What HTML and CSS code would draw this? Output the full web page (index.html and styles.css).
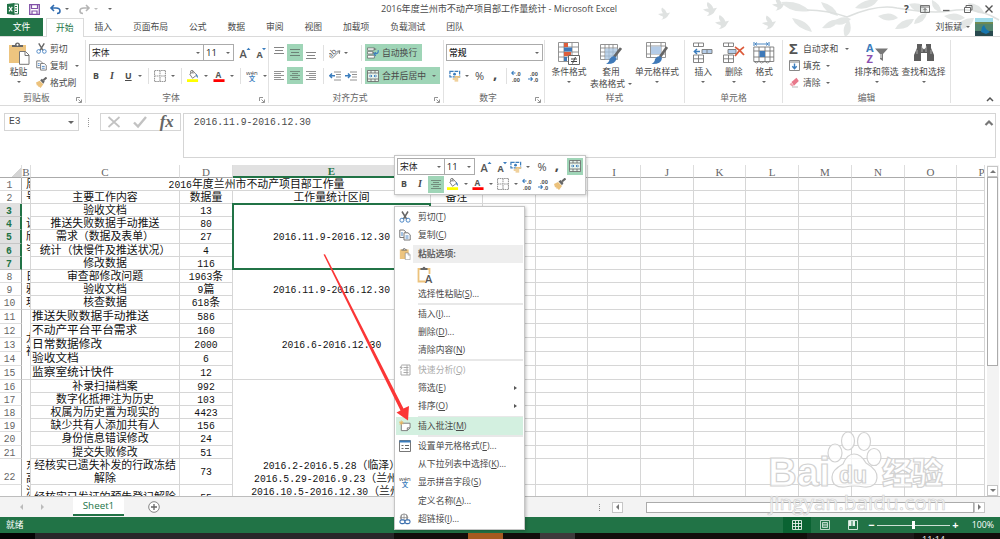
FILE: index.html
```html
<!DOCTYPE html>
<html lang="zh-CN">
<head>
    <meta charset="UTF-8">
    <title>2016年度兰州市不动产项目部工作量统计 - Microsoft Excel</title>
    <link rel="stylesheet" href="styles.css">
</head>
<body>
<svg class="defs">
    <symbol id="i-cut" viewBox="0 0 12 12"><path d="M3 0.5L7.6 8M9 0.5L4.4 8" stroke="#666" stroke-width="1.5" fill="none"/><circle cx="2.9" cy="9.2" r="2" fill="none" stroke="#4a86c5"/><circle cx="9.1" cy="9.2" r="2" fill="none" stroke="#4a86c5"/></symbol>
    <symbol id="i-copy" viewBox="0 0 12 12"><path d="M.8 1h4l2 2v5.500H.8z" fill="#fff" stroke="#777"/><path d="M5 3.800h4l2.200 2v5.200H5z" fill="#fff" stroke="#777"/><path d="M2 4h2M2 6h2M6.500 7h3M6.500 9h3" stroke="#4a86c5"/></symbol>
    <symbol id="i-brush" viewBox="0 0 12 12"><path d="M0 6l4-2 4 4-3 4-1.500-1.500-1 .2-.3-1.500-1.200 0z" fill="#ecc27c"/><path d="M4.500 3.500l2-1.500 3 3-1.500 2.300z" fill="#666"/><path d="M8 3.500L11.500.5" stroke="#666" stroke-width="2.200"/></symbol>
    <symbol id="i-paste" viewBox="0 0 22 23"><path d="M1 3h17v18H1z" fill="#edc47f"/><path d="M4 5V3h3q0-2.500 2.500-2.500T12 3h3v2z" fill="#666"/><circle cx="9.500" cy="2.800" r="1" fill="#fff"/><path d="M11.500 9.500h6l3.500 3.500v9.300h-9.500z" fill="#fff" stroke="#777"/><path d="M17 9.500v4h4" fill="none" stroke="#777"/></symbol>
    <symbol id="i-border" viewBox="0 0 11 11"><path d="M.5.5h10v10H.5zM5.500.5v10M.5 5.500h10" fill="none" stroke="#999" stroke-dasharray="1.500 .5"/></symbol>
    <symbol id="i-fill" viewBox="0 0 13 13"><path d="M3 4.500l4-3 3.500 4-4.500 3.500z" fill="#fff" stroke="#777"/><path d="M4 3.500V1q1.500-1.500 2.500 0v3" fill="none" stroke="#777"/><path d="M10 4q2.500 2 1.500 5Q9 7 10 4z" fill="#3b7dbd"/><path d="M0 10h12v3H0z" fill="#ff0"/></symbol>
    <symbol id="i-color" viewBox="0 0 12 13"><text x="2.200" y="9" class="svg-a">A</text><path d="M0 10h12v3H0z" fill="#f00"/></symbol>
    <symbol id="i-up" viewBox="0 0 11 12"><text x="0" y="11" class="svg-a big">A</text><path d="M7 3l2-2.200L11 3z" fill="#3b7dbd"/></symbol>
    <symbol id="i-down" viewBox="0 0 11 12"><text x="1" y="11" class="svg-a">A</text><path d="M6.500 1l2 2.200 2-2.200z" fill="#3b7dbd"/></symbol>
    <symbol id="i-wen" viewBox="0 0 13 13"><text x="0" y="5" class="svg-w">wén</text><text x="3" y="12" class="svg-z">文</text></symbol>
    <symbol id="i-top" viewBox="0 0 12 17"><path d="M1 3.500h10M2 6.500h8M1 9.500h10" stroke="#777" stroke-width=".9"/></symbol>
    <symbol id="i-mid" viewBox="0 0 12 17"><path d="M1 5.500h10M2 8.500h8M1 11.500h10" stroke="#67786e" stroke-width=".9"/></symbol>
    <symbol id="i-bot" viewBox="0 0 12 17"><path d="M1 8.500h10M2 11.500h8M1 14.500h10" stroke="#777" stroke-width=".9"/></symbol>
    <symbol id="i-left" viewBox="0 0 12 17"><path d="M1 4.500h10M1 6.500h7M1 8.500h10M1 10.500h7M1 12.500h10" stroke="#777" stroke-width=".8"/></symbol>
    <symbol id="i-center" viewBox="0 0 12 17"><path d="M1 4.500h10M3 6.500h6M1 8.500h10M3 10.500h6M1 12.500h10" stroke="#67786e" stroke-width=".8"/></symbol>
    <symbol id="i-right" viewBox="0 0 12 17"><path d="M1 4.500h10M4 6.500h7M1 8.500h10M4 10.500h7M1 12.500h10" stroke="#777" stroke-width=".8"/></symbol>
    <symbol id="i-orient" viewBox="0 0 12 12"><text x="-1.500" y="8" transform="rotate(-42 4 6)" class="svg-o">ab</text><path d="M3 11.500L10.500 4M7.500 4.500l3.300-.8-.5 3.300" fill="none" stroke="#777" stroke-width=".9"/></symbol>
    <symbol id="i-outdent" viewBox="0 0 12 9"><path d="M5 .5h7M7 3h5M7 5.500h5M5 8.500h7" stroke="#777" stroke-width=".8"/><path d="M6 4.300H1M3 2L.8 4.300 3 6.500" fill="none" stroke="#3b7dbd" stroke-width="1.400"/></symbol>
    <symbol id="i-indent" viewBox="0 0 12 9"><path d="M5 .5h7M7 3h5M7 5.500h5M5 8.500h7" stroke="#777" stroke-width=".8"/><path d="M0 4.300h5M3 2l2.200 2.300L3 6.500" fill="none" stroke="#3b7dbd" stroke-width="1.400"/></symbol>
    <symbol id="i-wrap" viewBox="0 0 13 12"><path d="M.5.5h7.500v2.500H.5zM.5 4.500h6v2.500h-6zM.5 8.500h7.500v3H.5z" fill="#fff" stroke="#666" stroke-width=".8"/><path d="M7 1.800h3M6 5.800h2" stroke="#666"/><path d="M12 3q1 4-4 4M9.500 5L7.500 7l2 2" fill="none" stroke="#3b7dbd" stroke-width="1.200"/></symbol>
    <symbol id="i-merge" viewBox="0 0 12 12"><path d="M.5.500h11v11H.5zM.5 3h11M.5 9h11M4 .5V3M8 .5V3M4 9v2.500M8 9v2.500" fill="#e7f3ec" stroke="#666" stroke-width=".8"/><path d="M2 6h3M10 6H7M3.800 4.800L5 6 3.800 7.200M8.200 4.800L7 6l1.200 1.200" fill="none" stroke="#3b7dbd" stroke-width=".9"/></symbol>
    <symbol id="i-money" viewBox="0 0 13 12"><path d="M1 1h10.500v6H1z" fill="#fff" stroke="#3b7dbd" stroke-width="1.300" stroke-dasharray="4 1"/><circle cx="6" cy="4" r="1.500" fill="#3b7dbd"/><path d="M6 6h6v2H6zM4 8.500h6v1.500H4zM6 10.500h4V12H6z" fill="#ecc27c"/></symbol>
    <symbol id="i-dec1" viewBox="0 0 12 12"><text x="5" y="5.500" class="svg-d">.0</text><text x="1" y="11.500" class="svg-d">.00</text><path d="M4.500 3H1M2.500 1.200L.8 3l1.700 1.800" fill="none" stroke="#3b7dbd" stroke-width="1.100"/></symbol>
    <symbol id="i-dec2" viewBox="0 0 12 12"><text x="2" y="5.500" class="svg-d">.00</text><text x="5.500" y="11.500" class="svg-d">.0</text><path d="M0 9h4M2.700 7.200L4.400 9l-1.700 1.800" fill="none" stroke="#3b7dbd" stroke-width="1.100"/></symbol>
    <symbol id="i-cond" viewBox="0 0 22 23"><path d="M.5.5h20v19H.5zM.5 5h20M.5 10h20M.5 15h20M6 .5v19M14 .5v19" fill="#fff" stroke="#888" stroke-width=".9"/><path d="M6 1h4v4H6zM6 10h7v4H6z" fill="#dd5e3c"/><path d="M6 5.500h8v4H6zM6 15h3v4H6z" fill="#3f79b8"/><path d="M10.500 13.500h11v9h-11z" fill="#fff" stroke="#666"/><path d="M13 17h6M13 19.500h6M17.500 15l-3 6.500" stroke="#444"/></symbol>
    <symbol id="i-table" viewBox="0 0 22 23"><path d="M.5 2.500h17v15H.5zM.5 6h17M.5 10h17M.5 14h17M5 2.500v15M9 2.500v15M13 2.500v15" fill="#fff" stroke="#888" stroke-width=".9"/><path d="M5 6.500h12.500v11H5z" fill="#a7c4e2" opacity=".75"/><path d="M21 6l-7 9" stroke="#666" stroke-width="2.700"/><path d="M14.500 14l2 2.500q-1 6-10.500 5.500 3.500-2 3.500-5 2-3 5-3z" fill="#3f79b8"/></symbol>
    <symbol id="i-style" viewBox="0 0 22 23"><path d="M.5.5h19v15H.5zM.5 4h19M.5 12h19M4.500.5v15M15 .5v15" fill="#fff" stroke="#888" stroke-width=".9"/><path d="M5 4.500h10V12H5z" fill="#b4cce8"/><path d="M21 5l-7 10" stroke="#666" stroke-width="2.700"/><path d="M14 14l2 2.500q-1 6-10.500 5.500 3.500-2 3.500-5 2-3 5-3z" fill="#3f79b8"/></symbol>
    <symbol id="i-insert" viewBox="0 0 22 23"><path d="M1.500 1h10v3.500h-10zM6.500 1v3.500M1.500 13h10v7.500h-10zM6.500 13v7.500M1.500 16.800h10" fill="#fff" stroke="#777" stroke-width=".9"/><path d="M10 7.500h10v4H10zM15 7.500v4" fill="#b4cce8" stroke="#777" stroke-width=".9"/><path d="M8 9.500H2.500M5 7L2.300 9.500 5 12" fill="none" stroke="#3b7dbd" stroke-width="1.400"/></symbol>
    <symbol id="i-delete" viewBox="0 0 22 23"><path d="M.5 1h10v3.500H.5zM5.500 1v3.500M.5 13h10v7.500H.5zM5.500 13v7.500M.5 16.800h10" fill="#fff" stroke="#777" stroke-width=".9"/><path d="M5 7.500h8v4H5z" fill="#b4cce8" stroke="#777" stroke-width=".9"/><path d="M12 5q5 3 9 8M21 5q-5 3-9 9" fill="none" stroke="#dc5b3b" stroke-width="1.700"/></symbol>
    <symbol id="i-format" viewBox="0 0 22 23"><path d="M1 0v4M16 0v4" stroke="#3b7dbd"/><path d="M2 2h13M4 .5L2 2l2 1.500M13 .5L15 2l-2 1.500" fill="none" stroke="#3b7dbd" stroke-width=".9"/><path d="M.8 5h20v14.500H.8zM.8 9h20M.8 15h20M6 5v14.500M12 5v14.500M17 5v14.500" fill="#fff" stroke="#777" stroke-width=".9"/><path d="M6.500 9H12v6H6.500z" fill="#3f79b8"/><path d="M1 19.500q2 3 5 0 2 3 6 0 2 3 5 0" fill="none" stroke="#777" stroke-width=".8"/></symbol>
    <symbol id="i-sort" viewBox="0 0 22 23"><text x="0" y="10" class="svg-s">A</text><text x=".5" y="20.500" class="svg-s z">Z</text><path d="M9 6.500h13L17 12v7l-3-2v-5z" fill="#777"/><path d="M15 12v4" stroke="#fff"/></symbol>
    <symbol id="i-find" viewBox="0 0 22 23"><path d="M4 2h5v3.500l2 2 2-2V2h5v4l3 7v6h-7v-8h-6v8H1v-6l3-7z" fill="#5d5d5d"/><path d="M4 8v4M18 8v4M9 4v6M13 4v6" stroke="#ddd" stroke-width=".6"/></symbol>
    <symbol id="i-down-box" viewBox="0 0 11 11"><path d="M.5.500h10v10H.5z" fill="#fff" stroke="#888"/><path d="M.5 2h10" stroke="#888"/><path d="M5.500 3.500v5M3.300 6.200l2.200 2.500 2.200-2.500" fill="none" stroke="#3b7dbd" stroke-width="1.400"/></symbol>
    <symbol id="i-erase" viewBox="0 0 11 11"><path d="M2.500 5L7.500.8 9.800 4 5 8.800z" fill="#e8788b"/><path d="M2.200 5.400l2.500 3.300-1.500.8L.6 7.500z" fill="#f0a3ae"/><path d="M3 10h6" stroke="#999" stroke-width=".7"/></symbol>
    <symbol id="i-analyse" viewBox="0 0 12 12"><path d="M3 1h8v10H2V7M4.500 3.500h5M4.500 6h5M4.500 8.500h5M8 1v10" fill="none" stroke="#aaa"/><path d="M3 0L.5 4H2L.8 7 4 3.200H2.600z" fill="#aaa"/></symbol>
    <symbol id="i-note" viewBox="0 0 13 12"><path d="M2.500 3h9.500v5l-3 3H2.500z" fill="#fff" stroke="#777"/><path d="M12 8H9v3" fill="none" stroke="#777"/><path d="M2.500 0v5M0 2.500h5M.8.8l3.400 3.400M4.200.8L.8 4.200" stroke="#eab65f" stroke-width=".9"/></symbol>
    <symbol id="i-cells" viewBox="0 0 12 12"><path d="M.5.5h11v11H.5z" fill="#fff" stroke="#777"/><path d="M.5 1.500h11" stroke="#3b7dbd" stroke-width="2"/><path d="M2.500 5.500h2M6 5.500h4M2.500 8.500h2M6 8.500h4" stroke="#666"/></symbol>
    <symbol id="i-link" viewBox="0 0 13 12"><circle cx="5.500" cy="4.500" r="4" fill="none" stroke="#777" stroke-width=".8"/><path d="M1.500 4.500h8M5.500.5v7M3 1.500q-1 3 0 5M8 1.500q1 3 0 5" stroke="#777" fill="none" stroke-width=".7"/><rect x="1" y="7" width="5.500" height="4" rx="2" fill="#fff" stroke="#3b6fae" stroke-width="1.200"/><rect x="6.500" y="7" width="5.500" height="4" rx="2" fill="#fff" stroke="#3b6fae" stroke-width="1.200"/></symbol>
    <symbol id="i-launch" viewBox="0 0 6 6"><path d="M.5 4V.5H4M2.500 2.500l2.500 2.500M5.500 2.500v3h-3" fill="none" stroke="#777" stroke-width=".8"/></symbol>
    <symbol id="bird" viewBox="0 0 16 16"><path d="M0 8q4-1 6-1-3-4-1-7 5 3 6 7l4-1-2 3q-2 5-9 6 3-2 2-4-3-1-6-3z" fill="#dfe2e1"/></symbol>
</svg>

<div class="window">
    <header class="titlebar">
        <svg class="deco" viewBox="0 0 350 37">
            <use href="#bird" x="8" y="7" width="13" height="14"/>
            <use href="#bird" x="53" y="1" width="15" height="17"/>
            <use href="#bird" x="65" y="14" width="15" height="17"/>
            <use href="#bird" x="112" y="15" width="15" height="16"/>
            <use href="#bird" x="122" y="-3" width="14" height="15"/>
            <g fill="#e3e6e5">
                <path d="M131 2q18-2 29 9-20 3-29-9zM142 18q16 2 20 14-16-4-20-14zM171 2q14 3 17 14-13-2-17-14zM181 23q11-9 20-4-8 9-20 4zM172 28q8-10 16-8-3 10-16 8zM199 20q5 12-4 17-4-10 4-17zM205 8q9-10 23-8-7 11-23 8zM228 16q13-6 20 2-11 6-20-2zM245 29q6-11 19-10-4 11-19 10zM259 4q14-3 20 8-15 2-20-8zM277 13q-2 10-13 11 2-10 13-11zM294 16q12-6 21 2-10 6-21-2zM306 29q5-12 18-11-3 12-18 11zM318 3q12 0 17 11-15-1-17-11zM325 20q12-1 14 10-12 0-14-10zM282 0q9 4 9 12-10-2-9-12z"/>
                <path d="M157 10q20 0 40 7 30-13 50-9 35 6 52 3 28-5 50 9" fill="none" stroke="#dde0df" stroke-width="1.600"/>
            </g>
        </svg>
        <div class="quick">
            <svg class="xl" viewBox="0 0 12 12"><path d="M6 1h5.500v10H6z" fill="#fff" stroke="#217346"/><path d="M8 3.500h2M8 6h2M8 8.500h2" stroke="#217346"/><path d="M0 1l7.500-1v12L0 11z" fill="#217346"/><path d="M2 3.800l3.300 4.500M5.300 3.800L2 8.300" stroke="#fff" stroke-width="1.100"/></svg>
            <svg class="save" viewBox="0 0 11 11"><path d="M.7.700h9.600v9.600H.7z" fill="#fff" stroke="#8252a8" stroke-width="1.300"/><path d="M2.500 1v3.500h6V1M3 10V7h5v3" fill="none" stroke="#8252a8" stroke-width="1.200"/></svg>
            <svg class="undo" viewBox="0 0 11 9"><path d="M4 0L1 3l3 3M1 3h5q4 0 4 3 0 2.500-3 2.500" fill="none" stroke="#2f6bb0" stroke-width="1.600"/></svg>
            <i class="caret"></i>
            <svg class="undo redo" viewBox="0 0 11 9"><path d="M7 0l3 3-3 3M10 3H5Q1 3 1 6q0 2.500 3 2.500" fill="none" stroke="#b5b5b5" stroke-width="1.600"/></svg>
            <i class="caret pale"></i>
            <i class="caret last"></i>
        </div>
        <h1>2016年度兰州市不动产项目部工作量统计 - Microsoft Excel</h1>
        <div class="winbtns">
            <b>?</b>
            <svg viewBox="0 0 10 8"><path d="M.5.5h9v7h-9zM.5 2h9M5 7V3.500M3.500 5L5 3.500 6.500 5" fill="none" stroke="#666" stroke-width=".9"/></svg>
            <svg viewBox="0 0 10 8"><path d="M2 5.500h6.500" stroke="#666" stroke-width="1.300"/></svg>
            <svg viewBox="0 0 10 8"><path d="M1.500 2.500h6v5h-6zM3 2.500V.5h6v4.500H7.500" fill="none" stroke="#666"/></svg>
            <svg viewBox="0 0 10 8"><path d="M1.500.5l7 7M8.500.5l-7 7" stroke="#555" stroke-width="1.400"/></svg>
        </div>
    </header>

    <nav class="tabs">
        <span class="file">文件</span><span class="tab active">开始</span><span class="tab">插入</span><span class="tab">页面布局</span><span class="tab">公式</span><span class="tab">数据</span><span class="tab">审阅</span><span class="tab">视图</span><span class="tab">加载项</span><span class="tab">负载测试</span><span class="tab">团队</span>
        <div class="user">刘振斌 <i class="caret"></i>
            <svg class="avatar" viewBox="0 0 18 18"><path d="M0 0h18v18H0z" fill="#52856f"/><path d="M0 0h18v5H0z" fill="#9edbea"/><path d="M0 4h18v2H0z" fill="#6f8a52"/><path d="M0 13h18v5H0z" fill="#28494e"/><path d="M6 14l1-5 2-2 2 4 4 3-4 2z" fill="#1675ae"/></svg>
        </div>
    </nav>

    <section class="ribbon">
        <div class="group g-clip">
            <div class="body">
                <div class="big paste"><svg><use href="#i-paste"/></svg><span>粘贴</span><i class="caret"></i></div>
                <div class="stack">
                    <span><svg><use href="#i-cut"/></svg>剪切</span>
                    <span><svg><use href="#i-copy"/></svg>复制<i class="caret far"></i></span>
                    <span><svg><use href="#i-brush"/></svg>格式刷</span>
                </div>
            </div>
            <footer>剪贴板<svg><use href="#i-launch"/></svg></footer>
        </div>

        <div class="group g-font">
            <div class="body rows">
                <div class="line">
                    <div class="select name">宋体<i class="caret"></i></div><div class="select size">11<i class="caret"></i></div>
                    <svg class="ic grow"><use href="#i-up"/></svg><svg class="ic shrink"><use href="#i-down"/></svg>
                </div>
                <div class="line marks">
                    <b>B</b><em>I</em><u>U</u><i class="caret"></i><i class="vr"></i>
                    <svg class="ic"><use href="#i-border"/></svg><i class="caret"></i><i class="vr"></i>
                    <svg class="ic"><use href="#i-fill"/></svg><i class="caret"></i>
                    <svg class="ic"><use href="#i-color"/></svg><i class="caret"></i><i class="vr"></i>
                    <svg class="ic"><use href="#i-wen"/></svg><i class="caret"></i>
                </div>
            </div>
            <footer>字体<svg><use href="#i-launch"/></svg></footer>
        </div>

        <div class="group g-align">
            <div class="body rows">
                <div class="line">
                    <svg class="al"><use href="#i-top"/></svg><svg class="al on"><use href="#i-mid"/></svg><svg class="al"><use href="#i-bot"/></svg><i class="vr"></i>
                    <div class="pair"><svg class="ic"><use href="#i-orient"/></svg><i class="caret"></i></div><i class="vr"></i>
                    <div class="btn wrap"><svg class="ic"><use href="#i-wrap"/></svg>自动换行</div>
                </div>
                <div class="line">
                    <svg class="al"><use href="#i-left"/></svg><svg class="al on"><use href="#i-center"/></svg><svg class="al"><use href="#i-right"/></svg><i class="vr"></i>
                    <div class="pair"><svg class="ic"><use href="#i-outdent"/></svg><svg class="ic"><use href="#i-indent"/></svg></div><i class="vr"></i>
                    <div class="btn merge"><svg class="ic"><use href="#i-merge"/></svg>合并后居中<i class="caret"></i></div>
                </div>
            </div>
            <footer>对齐方式<svg><use href="#i-launch"/></svg></footer>
        </div>

        <div class="group g-num">
            <div class="body rows">
                <div class="line"><div class="select">常规<i class="caret"></i></div></div>
                <div class="line nums">
                    <svg class="ic"><use href="#i-money"/></svg><i class="caret"></i><span class="pct">%</span><b class="comma">,</b><i class="vr"></i>
                    <svg class="ic"><use href="#i-dec1"/></svg><svg class="ic"><use href="#i-dec2"/></svg>
                </div>
            </div>
            <footer>数字<svg><use href="#i-launch"/></svg></footer>
        </div>

        <div class="group g-style">
            <div class="body">
                <div class="big"><svg><use href="#i-cond"/></svg><span>条件格式</span><i class="caret"></i></div>
                <div class="big"><svg><use href="#i-table"/></svg><span>套用</span><span class="second">表格格式<i class="caret"></i></span></div>
                <div class="big wide"><svg><use href="#i-style"/></svg><span>单元格样式</span><i class="caret"></i></div>
            </div>
            <footer>样式</footer>
        </div>

        <div class="group g-cells">
            <div class="body">
                <div class="big"><svg><use href="#i-insert"/></svg><span>插入</span><i class="caret"></i></div>
                <div class="big"><svg><use href="#i-delete"/></svg><span>删除</span><i class="caret"></i></div>
                <div class="big"><svg><use href="#i-format"/></svg><span>格式</span><i class="caret"></i></div>
            </div>
            <footer>单元格</footer>
        </div>

        <div class="group g-edit">
            <div class="body">
                <div class="stack">
                    <span><b class="sigma">Σ</b>自动求和<i class="caret far"></i></span>
                    <span><svg><use href="#i-down-box"/></svg>填充<i class="caret"></i></span>
                    <span><svg><use href="#i-erase"/></svg>清除<i class="caret"></i></span>
                </div>
                <div class="big"><svg><use href="#i-sort"/></svg><span>排序和筛选</span><i class="caret"></i></div>
                <div class="big"><svg><use href="#i-find"/></svg><span>查找和选择</span><i class="caret"></i></div>
            </div>
            <footer>编辑</footer>
        </div>
        <svg class="collapse" viewBox="0 0 8 6"><path d="M1 5l3-3 3 3" fill="none" stroke="#555" stroke-width="1.500"/></svg>
    </section>

    <section class="formula">
        <div class="namebox"><span class="n">E3</span><i class="caret"></i></div>
        <div class="dots"></div>
        <div class="fx">
            <svg viewBox="0 0 14 12"><path d="M1.500 1l11 10M12.500 1l-11 10" stroke="#c2c2c2" stroke-width="1.700"/></svg>
            <svg viewBox="0 0 14 12"><path d="M1 6.500l4 4L13 1" fill="none" stroke="#c2c2c2" stroke-width="2.400"/></svg>
            <em>fx</em>
        </div>
        <div class="input"><span class="n">2016.11.9-2016.12.30</span><svg viewBox="0 0 10 8"><path d="M1.500 6L5 2.500 8.500 6" fill="none" stroke="#777" stroke-width="2.200"/></svg></div>
    </section>

    <section class="sheet">
        <div class="grid" id="grid"></div>
        <div class="vscroll"><i class="sb up"></i><i class="thumb"></i><i class="sb down"></i></div>
    </section>

    <section class="sheetbar">
        <i class="nav prev"></i><i class="nav next"></i>
        <span class="sheet-tab">Sheet1</span>
        <svg class="add" viewBox="0 0 12 12"><circle cx="6" cy="6" r="5.300" fill="#fff" stroke="#777" stroke-width=".9"/><path d="M6 3v6M3 6h6" stroke="#666" stroke-width="1.300"/></svg>
        <div class="hscroll"><i class="grip"></i><i class="sb lt"></i><i class="thumb"></i><i class="sb rt"></i></div>
    </section>

    <footer class="status">
        <span class="ready">就绪</span>
        <div class="views">
            <span class="view on"><svg viewBox="0 0 10 10"><path d="M.5.5h9v9h-9zM.5 3.500h9M.5 6.500h9M3.500.5v9M6.500.5v9" fill="none" stroke="#e6f2eb" stroke-width=".9"/></svg></span>
            <span class="view"><svg viewBox="0 0 10 10"><path d="M.5.5h9v9h-9zM2.500 2.500h5v5h-5zM2.500 4.200h5M2.500 5.900h5" fill="none" stroke="#cfe3d7" stroke-width=".9"/></svg></span>
            <span class="view"><svg viewBox="0 0 10 10"><path d="M.5.5h9v9h-9z" fill="none" stroke="#cfe3d7"/><path d="M1 1h2.500v5H1zM4.500 1H7v5H4.500z" fill="#e6f2eb"/></svg></span>
        </div>
        <b class="zoom-sign">−</b><div class="slider"><i></i></div><b class="zoom-sign">+</b>
        <span class="percent">100%</span>
    </footer>

    <div class="taskbar"><i class="t1"></i><i class="t2"></i><i class="t3"></i><span>11:14</span></div>
</div>

<svg class="arrow" viewBox="0 0 90 172"><path d="M.5.5L2 .2 80.500 154.500 86 152 85 166.500 73.500 158.500 77.500 156.500z" fill="#fb3636"/></svg>

<div class="mini">
    <div class="line">
        <div class="select name">宋体<i class="caret"></i></div><div class="select size">11<i class="caret"></i></div>
        <svg class="ic m-up"><use href="#i-up"/></svg><svg class="ic m-down"><use href="#i-down"/></svg>
        <svg class="ic"><use href="#i-money"/></svg><i class="caret"></i><span class="pct">%</span><b class="comma">,</b>
        <span class="on"><svg class="ic"><use href="#i-merge"/></svg></span>
    </div>
    <div class="line second">
        <b>B</b><em>I</em><svg class="al on"><use href="#i-center"/></svg>
        <svg class="ic"><use href="#i-fill"/></svg><i class="caret"></i>
        <svg class="ic"><use href="#i-color"/></svg><i class="caret"></i>
        <svg class="ic"><use href="#i-border"/></svg><i class="caret"></i>
        <svg class="ic"><use href="#i-dec1"/></svg><svg class="ic"><use href="#i-dec2"/></svg><svg class="ic"><use href="#i-brush"/></svg>
    </div>
</div>

<ul class="menu">
    <li><svg><use href="#i-cut"/></svg>剪切(<u>T</u>)</li>
    <li><svg><use href="#i-copy"/></svg>复制(<u>C</u>)</li>
    <li class="head"><svg viewBox="0 0 22 23"><use href="#i-paste"/></svg><span>粘贴选项:</span></li>
    <li class="option"><svg viewBox="0 0 16 18"><path d="M1.500 3h11v12.500h-11z" fill="#fff" stroke="#ecc27c" stroke-width="1.800"/><path d="M3.500 4V2h2q1.500-2.500 3 0h2v2z" fill="#666"/><path d="M8 8h8v9H8z" fill="#fff"/><text x="8" y="16.500" class="svg-a big">A</text></svg></li>
    <li>选择性粘贴(<u>S</u>)...</li>
    <li class="sep"></li>
    <li>插入(<u>I</u>)...</li>
    <li>删除(<u>D</u>)...</li>
    <li>清除内容(<u>N</u>)</li>
    <li class="sep"></li>
    <li class="off"><svg><use href="#i-analyse"/></svg>快速分析(<u>Q</u>)</li>
    <li class="sub">筛选(<u>E</u>)</li>
    <li class="sub">排序(<u>O</u>)</li>
    <li class="sep"></li>
    <li class="hover"><svg><use href="#i-note"/></svg>插入批注(<u>M</u>)</li>
    <li class="sep"></li>
    <li><svg><use href="#i-cells"/></svg>设置单元格格式(<u>F</u>)...</li>
    <li>从下拉列表中选择(<u>K</u>)...</li>
    <li><svg><use href="#i-wen"/></svg>显示拼音字段(<u>S</u>)</li>
    <li>定义名称(<u>A</u>)...</li>
    <li><svg><use href="#i-link"/></svg>超链接(<u>I</u>)...</li>
</ul>

<svg class="watermark" viewBox="0 0 190 90">
    <g class="wm">
        <text x="3" y="55" class="wm-bai" textLength="62" lengthAdjust="spacingAndGlyphs">Bai</text>
        <ellipse cx="70" cy="22" rx="7" ry="9"/>
        <ellipse cx="83" cy="10" rx="6.500" ry="9"/>
        <ellipse cx="99" cy="10.500" rx="6.500" ry="9"/>
        <ellipse cx="109" cy="26" rx="7" ry="8.500"/>
        <path d="M89 23q7 0 12 9 12 7 11 15-1 10-13 9-10-2-19 0-13 1-13-10 0-7 11-13 4-10 11-10z"/>
        <text x="74" y="52" class="wm-du">du</text>
        <text x="117" y="53" class="wm-cn" textLength="61" lengthAdjust="spacingAndGlyphs">经验</text>
        <text x="4" y="79" class="wm-url" textLength="177" lengthAdjust="spacingAndGlyphs">jingyan.baidu.com</text>
    </g>
</svg>

<script>
    const rowHeights = [13, 13, 13, 13, 14, 13, 13, 13, 13, 14, 14, 14, 14, 14, 14, 13, 13, 13, 13, 14, 13, 26, 26];
    const columns = ['B', 'C', 'D', 'E', 'F', 'G', 'H', 'I', 'J', 'K', 'L', 'M', 'N', 'O', 'P'];
    // columns C and D, from row 2 down
    const work = [
        ['主要工作内容', '数据量'],
        ['验收文档', '13'], ['推送失败数据手动推送', '80'], ['需求（数据及表单）', '27'],
        ['统计（快慢件及推送状况）', '4'], ['修改数据', '116'],
        ['审查部修改问题', '1963条'], ['验收文档', '9篇'], ['核查数据', '618条'],
        ['推送失败数据手动推送', '586'], ['不动产平台平台需求', '160'], ['日常数据修改', '2000'],
        ['验收文档', '6'], ['监察室统计快件', '12'],
        ['补录扫描档案', '992'], ['数字化抵押注为历史', '103'], ['权属为历史置为现实的', '4423'],
        ['缺少共有人添加共有人', '156'], ['身份信息错误修改', '24'], ['提交失败修改', '51'],
        ['经核实已遗失补发的行政冻结<br>解除', '73'], ['经核实已发证的预告登记解除', '55']
    ];
    const grid = document.getElementById('grid');
    grid.style.gridTemplateRows = '13px ' + rowHeights.map(h => h + 'px').join(' ');

    // col 1 = row numbers, col 2 = B ...
    function put(cls, row, col, html, rowSpan = 1, colSpan = 1) {
        const el = document.createElement('div');
        el.className = cls;
        el.style.gridArea = `${row} / ${col} / span ${rowSpan} / span ${colSpan}`;
        el.innerHTML = html === '' ? '' : `<span>${html}</span>`;
        grid.appendChild(el);
    }
    const num = s => String(s).replace(/[0-9.\-]+/g, '<i class="n">$&</i>');

    put('corner', 1, 1, '');
    columns.forEach((c, i) => put('colhead' + (c === 'E' ? ' sel' : '') + (c === 'P' ? ' last' : ''), 1, i + 2, c));
    rowHeights.forEach((h, i) => {
        const n = i + 1;
        put('rowhead' + (n >= 3 && n <= 7 ? ' sel' : '') + (n === 22 ? ' low' : ''), n + 1, 1, n < 23 ? num(n) : '');
        for (let c = 6; c <= 16; c++) {
            if (c > 6 || n > 2) put('cell', n + 1, c, '');
        }
    });
    put('cell side', 2, 2, '周');
    put('cell side', 3, 2, '号');
    put('cell title', 2, 3, num('2016年度兰州市不动产项目部工作量'), 1, 4);
    put('cell', 3, 5, '工作量统计区间');
    put('cell', 3, 6, '备注');
    work.forEach(([c, d], i) => {
        const row = i + 3;
        put('cell' + (i >= 9 && i <= 13 ? ' left' : ''), row, 3, c);
        put('cell', row, 4, num(d));
    });
    put('cell names', 4, 2, '让<br>欣<br>岑', 5);
    put('cell names', 9, 2, '日<br>雅<br>玥', 3);
    put('cell names', 12, 2, '龙<br>祥', 5);
    put('cell names end', 17, 2, '东<br>高<br>沈', 8);
    put('cell date', 4, 5, num('2016.11.9-2016.12.30'), 5);
    put('cell date', 9, 5, num('2016.11.9-2016.12.30'), 3);
    put('cell date', 12, 5, num('2016.6-2016.12.30'), 5);
    put('cell date end', 17, 5, num('2016.2-2016.5.28（临泽）') + '<br>' + num('2016.5.29-2016.9.23（兰州）') + '<br>' + num('2016.10.5-2016.12.30（兰州）'), 8);
    put('selection', 4, 5, '', 5);
</script>
</body>
</html>
```
FILE: styles.css
```css
* {
    box-sizing: border-box;
}
body {
    margin: 0;
    width: 1000px;
    height: 539px;
    overflow: hidden;
    position: relative;
    background: #fff;
    color: #4a4a4a;
    font: 8.8px/12px "Open Sans", "Noto Sans CJK SC", sans-serif;
    white-space: nowrap;
}
svg {
    display: block;
    flex: none;
    overflow: visible;
}
.defs {
    display: none;
}
.svg-a { font: bold 9px "Open Sans", sans-serif; fill: #555; }
.svg-a.big { font-size: 11px; font-weight: 600; }
.svg-w { font: 6.5px "Open Sans", sans-serif; fill: #444; }
.svg-z { font: bold 7px "Noto Sans CJK SC", sans-serif; fill: #3b7dbd; }
.svg-o { font: 8px "Open Sans", sans-serif; fill: #555; }
.svg-d { font: bold 5.5px "Open Sans", sans-serif; fill: #555; }
.svg-s { font: bold 11px "Open Sans", sans-serif; fill: #3b7dbd; }
.svg-s.z { fill: #8a50b0; }
.caret {
    display: inline-block;
    flex: none;
    width: 0;
    height: 0;
    border: 2px solid transparent;
    border-top-color: #666;
    border-bottom: 0;
}
.window {
    display: flex;
    flex-direction: column;
    height: 539px;
}

/* title bar and tabs */
.titlebar {
    height: 18px;
    display: flex;
    align-items: center;
    position: relative;
}
.deco {
    position: absolute;
    left: 650px;
    top: 0;
    width: 350px;
    height: 37px;
    overflow: hidden;
}
.quick {
    width: 381px;
    padding-left: 7px;
    display: flex;
    align-items: center;
}
.xl { width: 12px; height: 12px; }
.save { width: 11px; height: 11px; margin-left: 10px; }
.undo { width: 11px; height: 9px; margin: 0 4px 0 10px; }
.caret.pale { border-top-color: #bbb; }
.caret.last { margin-left: 10px; }
h1 {
    margin: 0;
    font-size: 9.1px;
    font-weight: normal;
    flex: 1;
    letter-spacing: -.05px;
}
.winbtns {
    position: relative;
    display: flex;
    align-items: center;
    gap: 11.300px;
    padding-right: 6px;
    font-size: 10px;
}
.winbtns svg { width: 10px; height: 8px; }
.tabs {
    height: 19px;
    display: flex;
    position: relative;
    border-bottom: 1px solid #dadada;
    line-height: 18px;
}
.file {
    width: 43px;
    background: #217346;
    color: #fff;
    text-align: center;
    margin-right: 3px;
}
.tab {
    padding: 0 10.450px;
}
.tab.active {
    width: 38px;
    height: 19px;
    padding: 0 9px;
    background: #fff;
    border: 1px solid #dadada;
    border-bottom: 0;
    color: #217346;
}
.user {
    margin-left: auto;
    display: flex;
    align-items: center;
    gap: 4px;
    padding-right: 7px;
}
.avatar { width: 18px; height: 18px; margin-left: 1px; }

/* ribbon */
.ribbon {
    height: 69px;
    display: flex;
    border-bottom: 1px solid #dadada;
    padding-top: 3px;
}
.group {
    height: 63px;
    border-right: 1px solid #e2e2e2;
    display: flex;
    flex-direction: column;
}
.g-clip { width: 86px; }
.g-font { width: 183px; }
.g-align { width: 175px; }
.g-num { width: 101px; }
.g-style { width: 140px; }
.g-cells { width: 98px; }
.g-edit { width: 168px; }
.group .body {
    height: 52px;
    display: flex;
}
.group footer {
    height: 12px;
    display: flex;
    justify-content: center;
    align-items: center;
    color: #666;
    position: relative;
    padding: 1px 12px 0 0;
}
.g-style footer, .g-cells footer, .g-edit footer { padding-right: 0; }
.group footer svg {
    position: absolute;
    right: 3px;
    bottom: 0;
    width: 6px;
    height: 6px;
}
.big {
    display: flex;
    flex-direction: column;
    align-items: center;
    padding-top: 2px;
}
.big > svg { width: 22px; height: 23px; margin-bottom: 1px; }
.big > span { height: 12px; line-height: 12px; }
.big > .caret { margin-top: 3px; }
.big .second .caret { margin-left: 3px; vertical-align: 2px; }
.paste { width: 21px; margin-left: 8px; }
.stack {
    display: flex;
    flex-direction: column;
    margin-left: 7px;
}
.stack > span {
    height: 17px;
    display: flex;
    align-items: center;
}
.stack svg, .sigma { width: 11px; height: 11px; margin-right: 3px; }
.stack .caret { margin-left: 5px; }
.stack .caret.far { margin-left: 7px; }
.sigma { font-size: 15px; line-height: 11px; color: #555; }
.rows {
    flex-direction: column;
    padding-top: 4px;
    gap: 6px;
}
.line {
    height: 17px;
    display: flex;
    align-items: center;
}
.select {
    height: 17px;
    border: 1px solid #ababab;
    background: #fff;
    display: flex;
    align-items: center;
    justify-content: space-between;
    padding: 0 3px 0 2px;
    color: #222;
}
.ic { width: 12px; height: 12px; }
.vr {
    width: 1px;
    height: 16px;
    background: #e0e0e0;
}
.g-font .line { padding-left: 3px; }
.g-font .name { width: 115px; }
.g-font .size { width: 31px; margin-left: -1px; }
.size { font-size: 9.5px; }
.grow { margin-left: 5px; }
.shrink { margin-left: 4px; }
.marks b { margin-left: 4px; width: 17px; }
.marks em { width: 15px; font-family: "Liberation Serif", serif; font-weight: bold; font-size: 10px; }
.marks u { width: 13px; font-weight: bold; }
.marks .vr { margin: 0 5px 0 6px; }
.marks .ic + .caret { margin-left: 5px; }
.marks .caret + .ic { margin-left: 5px; }
.g-align .line { padding-left: 2px; }
.al {
    width: 16px;
    height: 17px;
    padding: 0 2px;
}
.on {
    background: #9fd5b7;
}
.g-align .vr { margin: 0 5px 0 4px; }
.g-align .pair {
    width: 28px;
    display: flex;
    align-items: center;
    justify-content: space-between;
}
.g-align .pair .caret { margin-right: 9px; }
.btn {
    height: 17px;
    background: #9fd5b7;
    display: flex;
    align-items: center;
    gap: 3px;
    padding: 0 2px;
    margin-left: -2px;
}
.btn.wrap { width: 57px; }
.btn.merge { width: 75px; }
.btn .caret { margin-left: 3px; }
.g-num .select { width: 97px; margin-left: 2px; font-weight: 500; }
.nums { padding-left: 5px; }
.nums .caret { margin: 0 6px 0 4px; }
.pct { font-size: 11px; width: 18px; }
.comma { font-size: 15px; line-height: 8px; width: 13px; padding-bottom: 6px; }
.nums .vr { margin-right: 4px; }
.nums .ic + .ic { margin-left: 5px; }
.g-style .body { padding-left: 5px; }
.g-style .big { width: 38px; }
.g-style .big:nth-child(2) { width: 46px; }
.g-style .wide { width: 46px; }
.g-cells .body { padding-left: 3px; }
.g-cells .big { width: 30.500px; }
.g-edit .stack { width: 64px; margin-left: 6px; }
.g-edit .big { width: 47px; }
.collapse { width: 8px; height: 6px; margin: 56px 0 0 35px; }

/* formula bar */
.formula {
    height: 59px;
    padding: 7px 4px 0;
    display: flex;
    align-items: flex-start;
    font-family: "Liberation Mono", "Noto Sans CJK SC", monospace;
}
.namebox, .fx, .input {
    border: 1px solid #d5d5d5;
    height: 18px;
    display: flex;
    align-items: center;
}
.namebox {
    width: 75px;
    padding: 0 4px;
    justify-content: space-between;
}
.namebox .caret { border-width: 3px 3px 0; }
.dots {
    width: 2px;
    height: 9px;
    margin: 5px 10px 0 9px;
    border-left: 1px dotted #999;
}
.fx {
    width: 81px;
    padding: 0 6px;
    justify-content: space-between;
}
.fx svg { width: 14px; height: 12px; }
.fx em { font: italic bold 17px/14px "Liberation Serif", serif; color: #666; }
.input {
    width: 814px;
    height: 45px;
    margin-left: 2px;
    padding: 3px 1px 0 10px;
    align-items: flex-start;
    justify-content: space-between;
}
.input svg { width: 10px; height: 8px; margin-top: 2px; }

/* grid */
.sheet {
    height: 332px;
    display: flex;
    overflow: hidden;
    border-bottom: 1px solid #bdbdbd;
}
.grid {
    width: 985px;
    flex: none;
    display: grid;
    grid-template-columns: 22px 9px 149px 53px 198px 52px 53px 52px 53px 53px 52px 53px 53px 53px 52px 28px;
    font: 10.900px/13px "Liberation Mono", "Noto Sans CJK SC", monospace;
    color: #111;
}
.grid > div {
    min-width: 0;
    min-height: 0;
    display: flex;
    align-items: center;
    justify-content: center;
    overflow: hidden;
    text-align: center;
}
.grid .cell {
    background: #fff;
    border-right: 1px solid #d6d6d6;
    border-bottom: 1px solid #d6d6d6;
    padding-top: 2px;
}
.grid .cell.left {
    justify-content: flex-start;
    padding-left: 1px;
    font-size: 11.700px;
}
.grid .side {
    justify-content: flex-start;
    padding-left: 4px;
}
.grid .names {
    justify-content: flex-start;
    padding: 2px 0 0 4px;
}
.grid .end {
    align-items: flex-end;
    height: 120px;
}
.grid .date { padding-top: 1px; }
.n {
    display: inline-block;
    font-style: normal;
    font-size: 9.750px;
    transform: scaleY(1.18);
}
.colhead {
    border-right: 1px solid #ddd;
    border-bottom: 1px solid #ababab;
    color: #666;
    font-size: 11px;
    font-family: "Liberation Serif", serif;
    padding-top: 2px;
}
.colhead.last {
    padding-left: 22px;
}
.colhead.sel {
    background: #e1e1e1;
    color: #217346;
    font-weight: bold;
    border-bottom: 2px solid #217346;
}
.corner {
    border-right: 1px solid #ddd;
    border-bottom: 1px solid #ababab;
    background: linear-gradient(135deg, #fff 70%, #d5d5d5 70%);
}
.rowhead {
    border-right: 1px solid #ababab;
    border-bottom: 1px solid #ddd;
    color: #666;
    padding: 2px 2px 0 0;
}
.rowhead.sel {
    background: #e1e1e1;
    color: #217346;
    font-weight: bold;
    border-right: 2px solid #217346;
    border-bottom-color: #c6c6c6;
}
.grid .low { align-items: flex-end; }
.grid .selection {
    border: 2px solid #217346;
    margin: -1px 0 0 -1px;
}

/* scrollbars */
.vscroll {
    width: 12px;
    margin-left: 2px;
    display: flex;
    flex-direction: column;
    background: #f3f3f3;
}
.sb {
    width: 11px;
    height: 11px;
    flex: none;
    background: #fff;
    border: 1px solid #c6c6c6;
    display: flex;
    align-items: center;
    justify-content: center;
}
.sb::after {
    content: "";
    border: 3px solid transparent;
}
.sb.up::after { border-bottom-color: #777; border-top: 0; }
.sb.down::after { border-top-color: #777; border-bottom: 0; }
.sb.lt::after { border-right-color: #777; border-left: 0; }
.sb.rt::after { border-left-color: #777; border-right: 0; }
.thumb {
    background: #fff;
    border: 1px solid #ababab;
}
.vscroll .up { margin-top: 1px; }
.vscroll .thumb { width: 11px; height: 189px; }
.vscroll .down { margin-top: auto; }

.sheetbar {
    height: 20px;
    background: #f3f3f3;
    display: flex;
    align-items: center;
}
.nav {
    border: 3px solid transparent;
    border-right-color: #bbb;
    border-left: 0;
    margin-left: 20px;
}
.nav.next {
    border-left: 3px solid #bbb;
    border-right: 0;
    margin-left: 18px;
}
.sheet-tab {
    width: 51px;
    height: 19px;
    margin: -2px 0 0 29px;
    background: #fff;
    border-bottom: 2px solid #217346;
    color: #217346;
    font-size: 9.800px;
    line-height: 18px;
    text-align: center;
}
.add { width: 12px; height: 12px; margin-left: 24px; }
.hscroll {
    display: flex;
    align-items: center;
    margin-left: auto;
    width: 386px;
    margin-right: 15px;
}
.grip { width: 1px; height: 7px; border-left: 1px dotted #888; margin-right: 12px; }
.hscroll .thumb { width: 328px; height: 11px; margin-left: 23px; }

.status {
    height: 16px;
    background: #217346;
    color: #fff;
    display: flex;
    align-items: center;
    padding: 0 6px;
}
.ready { width: 777px; }
.views { display: flex; }
.view {
    width: 28px;
    height: 16px;
    display: flex;
    align-items: center;
    justify-content: center;
}
.view.on { background: #0a6332; }
.view svg { width: 10px; height: 10px; }
.zoom-sign { font-size: 11px; width: 9px; text-align: center; }
.slider {
    width: 73px;
    height: 1px;
    margin: 0 1px;
    background: #cde0d5;
    position: relative;
}
.slider i {
    position: absolute;
    left: 35px;
    top: -4px;
    width: 3px;
    height: 8px;
    background: #fff;
}
.percent { margin-left: auto; }
.taskbar {
    height: 6px;
    background: linear-gradient(90deg, #050505 35px, #28282a 35px, #28282a 394px, #120f0c 394px);
    display: flex;
    overflow: hidden;
}
.t1 { width: 35px; margin-left: 468px; background: #a55a20; }
.t2 { width: 35px; margin-left: 37px; background: #3d3b3c; }
.t3 { width: 107px; margin-left: 232px; background: #1e1c1c; }
.taskbar span { color: #eee; padding: 3px 0 0 8px; font-size: 9px; line-height: 8px; }

/* things that float above the sheet */
.arrow {
    position: absolute;
    left: 322.500px;
    top: 253.500px;
    width: 90px;
    height: 172px;
    z-index: 3;
}
.mini {
    position: absolute;
    left: 394px;
    top: 155px;
    width: 192px;
    height: 40px;
    padding: 2px;
    background: #fff;
    border: 1px solid #c6c6c6;
    box-shadow: 1px 1px 3px rgba(0, 0, 0, .2);
}
.mini .name { width: 50px; }
.mini .size { width: 32px; margin-left: -1px; }
.mini .m-up { margin-left: 5px; }
.mini .m-down { margin: 0 2px 0 4px; }
.mini .caret { margin-left: 4px; }
.mini .select .caret { margin-left: 0; }
.mini .pct { margin-left: 8px; }
.mini span.on {
    width: 16px;
    height: 17px;
    padding: 2px;
    margin-left: auto;
}
.mini .second { padding-left: 4px; height: 18px; }
.mini .second b { width: 17px; }
.mini .second em { width: 10px; font-family: "Liberation Serif", serif; font-weight: bold; font-size: 10px; }
.mini .second .al { margin-right: 3px; }
.mini .second .caret { margin-left: 5px; }
.mini .second .caret + .ic { margin-left: 4px; }
.mini .second .ic + .ic { margin-left: 4px; }
.menu {
    position: absolute;
    left: 394px;
    top: 206px;
    width: 131px;
    height: 324px;
    margin: 0;
    padding: 1px;
    list-style: none;
    background: #fff;
    border: 1px solid #c6c6c6;
    box-shadow: 1px 1px 3px rgba(0, 0, 0, .25);
    z-index: 2;
}
.menu li {
    height: 18.300px;
    line-height: 19px;
    padding-left: 22px;
    position: relative;
    font-size: 8.800px;
    letter-spacing: .02px;
}
.menu li > svg {
    position: absolute;
    left: 3px;
    top: 3px;
    width: 12px;
    height: 12px;
}
.menu .head {
    padding: 0 0 0 17px;
}
.menu .head span {
    display: block;
    height: 18px;
    background: #eee;
    padding-left: 5px;
    font-weight: bold;
    color: #666;
}
.menu .option { height: 22px; }
.menu .option > svg {
    left: 21px;
    top: 3px;
    width: 16px;
    height: 18px;
}
.menu .sep {
    height: 1.400px;
    padding: 0;
    margin-left: 22px;
    background: #e8e8e8;
}
.menu .off { color: #aaa; }
.menu .hover { background: #d3f0e0; }
.sub::after {
    content: "";
    position: absolute;
    right: 6px;
    top: 7px;
    border: 2.500px solid transparent;
    border-left: 3px solid #555;
    border-right: 0;
}
.watermark {
    position: absolute;
    left: 765px;
    top: 431px;
    width: 190px;
    height: 90px;
}
.wm {
    fill: rgba(255, 255, 255, .75);
    stroke: #d2d2d2;
    stroke-width: 1.200px;
}
.wm-bai { font: bold 40px "Liberation Sans", sans-serif; }
.wm-du { font: bold 23px "Liberation Sans", sans-serif; }
.wm-cn { font: 900 31px "Noto Sans CJK SC", sans-serif; }
.wm-url { font: 20px "Open Sans", sans-serif; stroke-width: .7px; }
```
